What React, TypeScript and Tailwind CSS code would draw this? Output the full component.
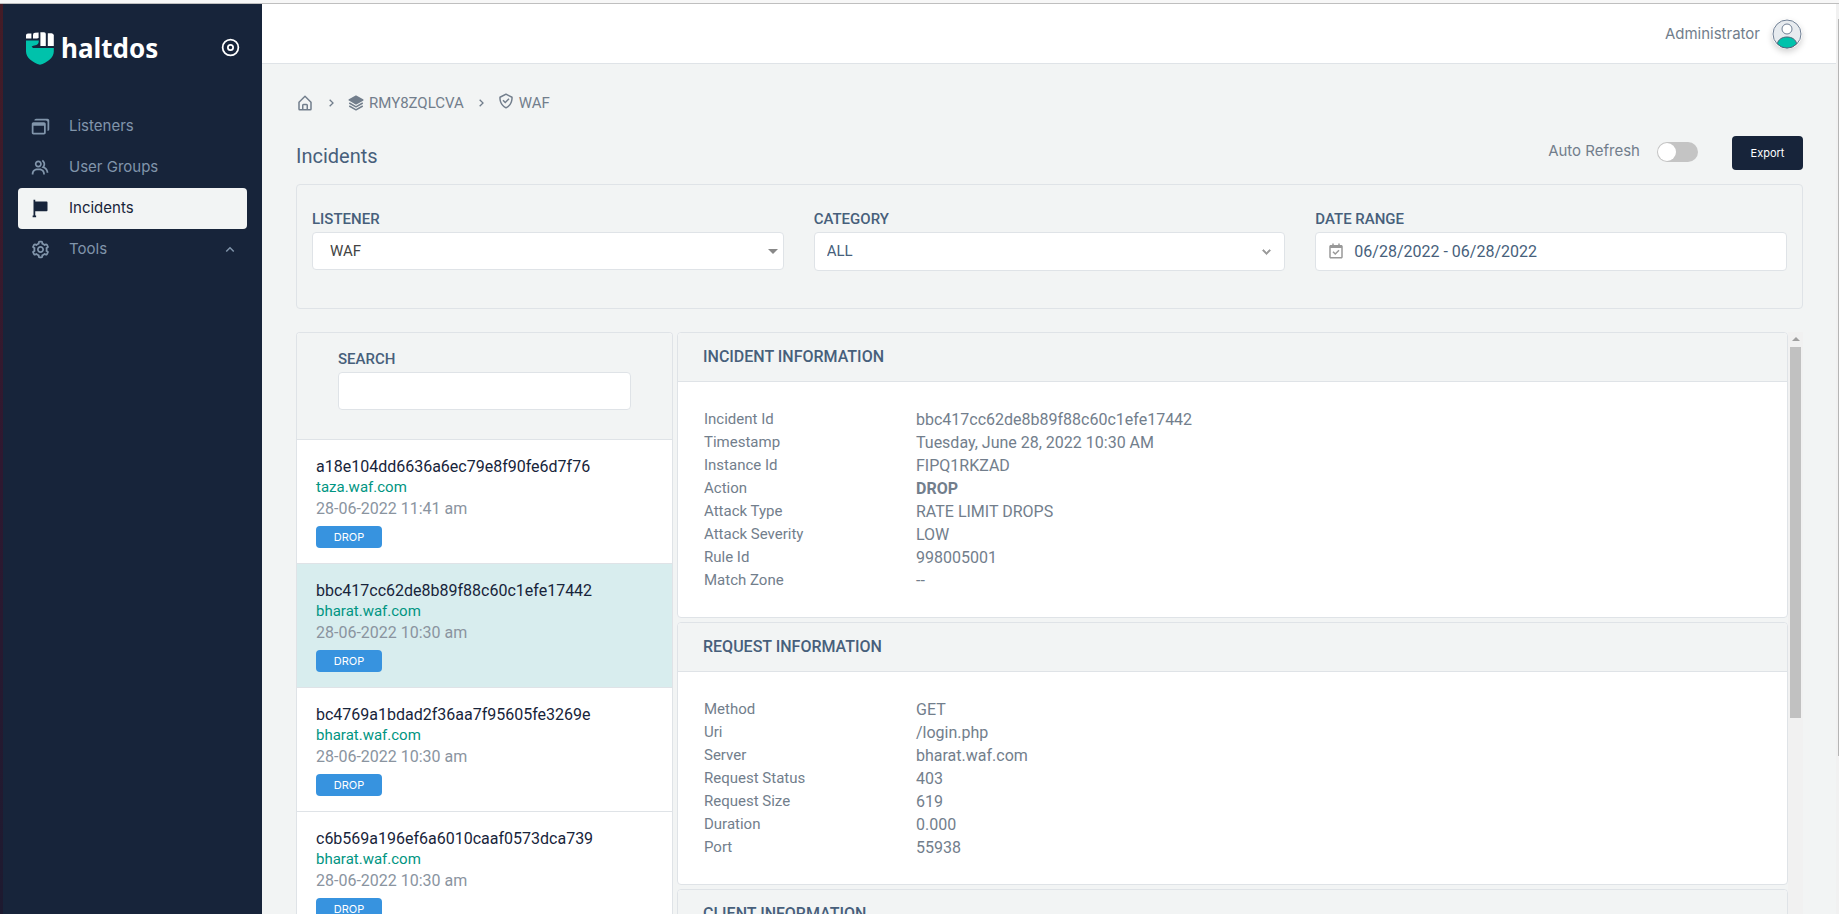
import { useState } from "react";
import type { ReactNode } from "react";
import {
  BiCalendarCheck,
  BiCheckShield,
  BiChevronDown,
  BiChevronRight,
  BiChevronUp,
  BiCog,
  BiDisc,
  BiGroup,
  BiHomeAlt,
  BiSolidFlag,
  BiSolidLayer,
  BiWindows,
} from "react-icons/bi";

const incidents = [
  { id: "a18e104dd6636a6ec79e8f90fe6d7f76", host: "taza.waf.com", time: "28-06-2022 11:41 am" },
  { id: "bbc417cc62de8b89f88c60c1efe17442", host: "bharat.waf.com", time: "28-06-2022 10:30 am" },
  { id: "bc4769a1bdad2f36aa7f95605fe3269e", host: "bharat.waf.com", time: "28-06-2022 10:30 am" },
  { id: "c6b569a196ef6a6010caaf0573dca739", host: "bharat.waf.com", time: "28-06-2022 10:30 am" },
];

const incidentInfo = [
  ["Incident Id", "bbc417cc62de8b89f88c60c1efe17442"],
  ["Timestamp", "Tuesday, June 28, 2022 10:30 AM"],
  ["Instance Id", "FIPQ1RKZAD"],
  ["Action", "DROP"],
  ["Attack Type", "RATE LIMIT DROPS"],
  ["Attack Severity", "LOW"],
  ["Rule Id", "998005001"],
  ["Match Zone", "--"],
];

const requestInfo = [
  ["Method", "GET"],
  ["Uri", "/login.php"],
  ["Server", "bharat.waf.com"],
  ["Request Status", "403"],
  ["Request Size", "619"],
  ["Duration", "0.000"],
  ["Port", "55938"],
];

const labelClass = "block text-[15px] leading-[20px] font-medium text-[#475f7b]";

const Logo = () => (
  <svg width="28" height="33" viewBox="0 0 28 33" aria-hidden="true">
    <path d="M0 3.2Q0 1.6 2 1.6L5.4 1.4V6.6H0Z" fill="#fff" />
    <path d="M7 3Q7 .8 9 .8L12.6 .4V6L11 6.6H7Z" fill="#fff" />
    <path d="M14.4 .2H18Q19.8 .2 19.8 2V14H14.4Z" fill="#fff" />
    <path d="M21.8 1.2H25.6Q27.8 1.4 27.8 3.4V14H21.8Z" fill="#fff" />
    <path
      d="M0 8.6H12.8Q13 12.8 9.4 13.2Q7 13.4 5.6 14.6L7 16H27.8V19.4C27.8 26 21 30.4 14 32.8C7 30.4 0 26 0 19.4Z"
      fill="#00c2ab"
    />
  </svg>
);

const Avatar = () => (
  <svg
    width="30"
    height="30"
    viewBox="0 0 30 30"
    className="rounded-full shadow-[0_3px_6px_rgba(0,0,0,0.18)]"
    aria-hidden="true"
  >
    <circle cx="15" cy="15" r="14" fill="#e7ebef" stroke="#6f7f94" strokeWidth="1" />
    <circle cx="15" cy="10" r="5" fill="#fff" stroke="#6f7f94" strokeWidth="1" />
    <path
      d="M5.4 24.6C6.2 20.6 10 18 15 18S23.800 20.600 24.600 24.600C22 27.500 18.800 29 15 29S8 27.500 5.400 24.600Z"
      fill="#00c2ab"
      stroke="#51637a"
      strokeWidth="1"
    />
  </svg>
);

const NavItem = ({
  icon,
  label,
  active = false,
  children,
}: {
  icon: ReactNode;
  label: string;
  active?: boolean;
  children?: ReactNode;
}) => (
  <a
    href="#"
    className={
      active
        ? "flex h-[41px] items-center rounded bg-[#f2f4f4] px-3 text-[#17243a]"
        : "flex h-[41px] items-center rounded px-3 text-[#8195ab]"
    }
  >
    {icon}
    <span className="ml-[18px] flex-1">{label}</span>
    {children}
  </a>
);

const Sidebar = () => (
  <aside className="w-[259px] shrink-0 bg-[#17243a] px-[15px]">
    <div className="flex items-center pt-[28px] pl-2">
      <Logo />
      <span className="ml-[7px] flex-1 font-['Noto_Sans',sans-serif] text-[26px] leading-[33px] font-bold text-white">
        haltdos
      </span>
      <button type="button" aria-label="Toggle menu" className="mr-[6px] mb-[2px] text-white">
        <BiDisc size={21} />
      </button>
    </div>
    <nav className="mt-[41px] font-[Inter,sans-serif] text-[15px]">
      <NavItem icon={<BiWindows size={21} />} label="Listeners" />
      <NavItem icon={<BiGroup size={21} />} label="User Groups" />
      <NavItem icon={<BiSolidFlag size={21} />} label="Incidents" active />
      <NavItem icon={<BiCog size={21} />} label="Tools">
        <BiChevronUp size={18} className="-mr-1" />
      </NavItem>
    </nav>
  </aside>
);

const InfoCard = ({ title, rows = [] }: { title: string; rows?: string[][] }) => (
  <section className="rounded border border-[#dfe3e7] bg-white">
    <h2 className="flex h-[49px] items-center rounded-t border-b border-[#dfe3e7] bg-[#f2f4f4] px-[25px] text-[16px] font-medium text-[#475f7b]">
      {title}
    </h2>
    <table className="mx-[26px] mt-[26px] mb-[25px] text-left">
      <tbody>
        {rows.map(([name, value]) => (
          <tr key={name} className="h-[23px] leading-[23px]">
            <th scope="row" className="w-[212px] p-0 font-normal">
              {name}
            </th>
            <td className={value === "DROP" ? "p-0 text-[16px] font-bold" : "p-0 text-[16px]"}>{value}</td>
          </tr>
        ))}
      </tbody>
    </table>
  </section>
);

const App = () => {
  const [search, setSearch] = useState("");
  const [selected, setSelected] = useState(incidents[1].id);

  return (
    <div className="flex h-screen flex-col overflow-hidden bg-[#f2f4f4] font-[Roboto,sans-serif] text-[15px] text-[#727e8c]">
      {/* Window edge */}
      <div className="h-1 shrink-0 border-b border-[#bfbfbf] bg-[#f7f7f7]"></div>

      <div className="flex min-h-0 flex-1">
        <div className="w-[3px] shrink-0 bg-linear-to-b from-[#451c26] via-[#2f1830] to-[#1d1a30]"></div>
        <Sidebar />

        <div className="flex min-w-0 flex-1 flex-col">
          <header className="flex h-[60px] shrink-0 items-center justify-end gap-3 border-b border-[#dfe3e7] bg-white pr-[34px]">
            <span className="pt-[2px] font-[Inter,sans-serif]">Administrator</span>
            <Avatar />
          </header>

          <main className="flex min-h-0 flex-1 flex-col pr-[33px] pl-[34px]">
            {/* Breadcrumbs */}
            <nav aria-label="Breadcrumb" className="mt-[28px] flex h-[22px] shrink-0 items-center">
              <a href="#" aria-label="Home">
                <BiHomeAlt size={18} />
              </a>
              <BiChevronRight size={16} className="mr-2 ml-[9px]" />
              <a href="#" className="flex items-center gap-1">
                <BiSolidLayer size={18} />
                RMY8ZQLCVA
              </a>
              <BiChevronRight size={16} className="mr-2 ml-[9px]" />
              <a href="#" className="flex items-center gap-1">
                <BiCheckShield size={18} className="mb-1" />
                WAF
              </a>
            </nav>

            {/* Title and actions */}
            <div className="mt-[22px] flex h-[34px] shrink-0 items-center">
              <h1 className="flex-1 pt-[5px] text-[20px] text-[#475f7b]">Incidents</h1>
              <label className="flex items-center gap-[17px] pb-[3px]">
                <span className="font-[Inter,sans-serif]">Auto Refresh</span>
                <input type="checkbox" className="peer sr-only" />
                <span className="flex h-5 w-[41px] items-center rounded-full bg-[#c4c4c4] px-px peer-checked:justify-end">
                  <span className="size-[18px] rounded-full bg-white"></span>
                </span>
              </label>
              <button
                type="button"
                className="ml-[34px] h-[34px] w-[71px] rounded bg-[#17243a] font-[Inter,sans-serif] text-[11px] text-white"
              >
                Export
              </button>
            </div>

            {/* Filters */}
            <div className="mt-[14px] grid shrink-0 grid-cols-3 gap-[30px] rounded border border-[#dfe3e7] px-[15px] pt-6 pb-[37px]">
              <div>
                <label htmlFor="listener" className={labelClass}>
                  LISTENER
                </label>
                <div className="relative mt-[3px]">
                  <select
                    id="listener"
                    className="block h-[38px] w-full appearance-none rounded border border-[#dfe3e7] bg-white px-[17px] pt-px text-[#444444]"
                  >
                    <option>WAF</option>
                  </select>
                  <span className="pointer-events-none absolute top-[17px] right-[6px] border-x-5 border-t-5 border-x-transparent border-t-[#888888]"></span>
                </div>
              </div>
              <div>
                <label htmlFor="category" className={labelClass}>
                  CATEGORY
                </label>
                <div className="relative mt-[3px]">
                  <select
                    id="category"
                    className="block h-[39px] w-full appearance-none rounded border border-[#dfe3e7] bg-white px-3 text-[#475f7b]"
                  >
                    <option>ALL</option>
                  </select>
                  <BiChevronDown
                    size={17}
                    className="pointer-events-none absolute top-[11px] right-[10px] stroke-1 text-[#999999]"
                  />
                </div>
              </div>
              <div>
                <label htmlFor="range" className={labelClass}>
                  DATE RANGE
                </label>
                <div className="relative mt-[3px]">
                  <BiCalendarCheck size={18} className="pointer-events-none absolute top-[10px] left-[12px] text-[#999999]" />
                  <input
                    id="range"
                    type="text"
                    defaultValue="06/28/2022 - 06/28/2022"
                    className="block h-[39px] w-full rounded border border-[#dfe3e7] bg-white pr-3 pl-[38px] text-[16px] text-[#475f7b]"
                  />
                </div>
              </div>
            </div>

            <div className="mt-[23px] flex min-h-0 flex-1">
              {/* Incident list */}
              <div className="w-[377px] shrink-0 overflow-hidden rounded-t border border-b-0 border-[#dfe3e7] bg-white">
                <div className="border-b border-[#dfe3e7] bg-[#f2f4f4] px-[41px] pt-4 pb-[29px]">
                  <label htmlFor="search" className={labelClass}>
                    SEARCH
                  </label>
                  <input
                    id="search"
                    type="text"
                    value={search}
                    onChange={(e) => setSearch(e.target.value)}
                    className="mt-[3px] block h-[38px] w-full rounded border border-[#dfe3e7] bg-white px-3"
                  />
                </div>
                {incidents
                  .filter((item) => item.id.includes(search))
                  .map((item) => (
                    <button
                      key={item.id}
                      type="button"
                      onClick={() => setSelected(item.id)}
                      className={
                        item.id === selected
                          ? "block w-full border-b border-[#dfe3e7] bg-[#d8edee] px-[19px] pt-4 pb-[15px] text-left leading-[21px]"
                          : "block w-full border-b border-[#dfe3e7] bg-white px-[19px] pt-4 pb-[15px] text-left leading-[21px]"
                      }
                    >
                      <span className="block text-[16px] leading-[21px] text-[#17243a]">{item.id}</span>
                      <span className="block text-[#009582]">{item.host}</span>
                      <span className="block text-[16px] leading-[21px] text-[#8a949f]">{item.time}</span>
                      <span className="mt-[7px] flex h-[22px] w-[66px] items-center justify-center rounded bg-[#3793df] font-[Inter,sans-serif] text-[11px] text-white">
                        DROP
                      </span>
                    </button>
                  ))}
              </div>

              {/* Incident details */}
              <div className="ml-1 flex min-w-0 flex-1 flex-col gap-1 overflow-hidden">
                <InfoCard title="INCIDENT INFORMATION" rows={incidentInfo} />
                <InfoCard title="REQUEST INFORMATION" rows={requestInfo} />
                <InfoCard title="CLIENT INFORMATION" />
              </div>
              <div className="flex w-[15px] shrink-0 flex-col items-center bg-[#f1f1f1]">
                <span className="mt-[5px] border-x-4 border-b-4 border-x-transparent border-b-[#a0a0a0]"></span>
                <span className="mt-[6px] h-[371px] w-[11px] bg-[#c1c1c1]"></span>
              </div>
            </div>
          </main>
        </div>

        {/* Page scrollbar */}
        <div className="flex w-[3px] shrink-0 justify-end bg-[#f1f1f1] pt-[15px]">
          <span className="h-[737px] w-px bg-[#b5b5b5]"></span>
        </div>
      </div>
    </div>
  );
};

export default App;
